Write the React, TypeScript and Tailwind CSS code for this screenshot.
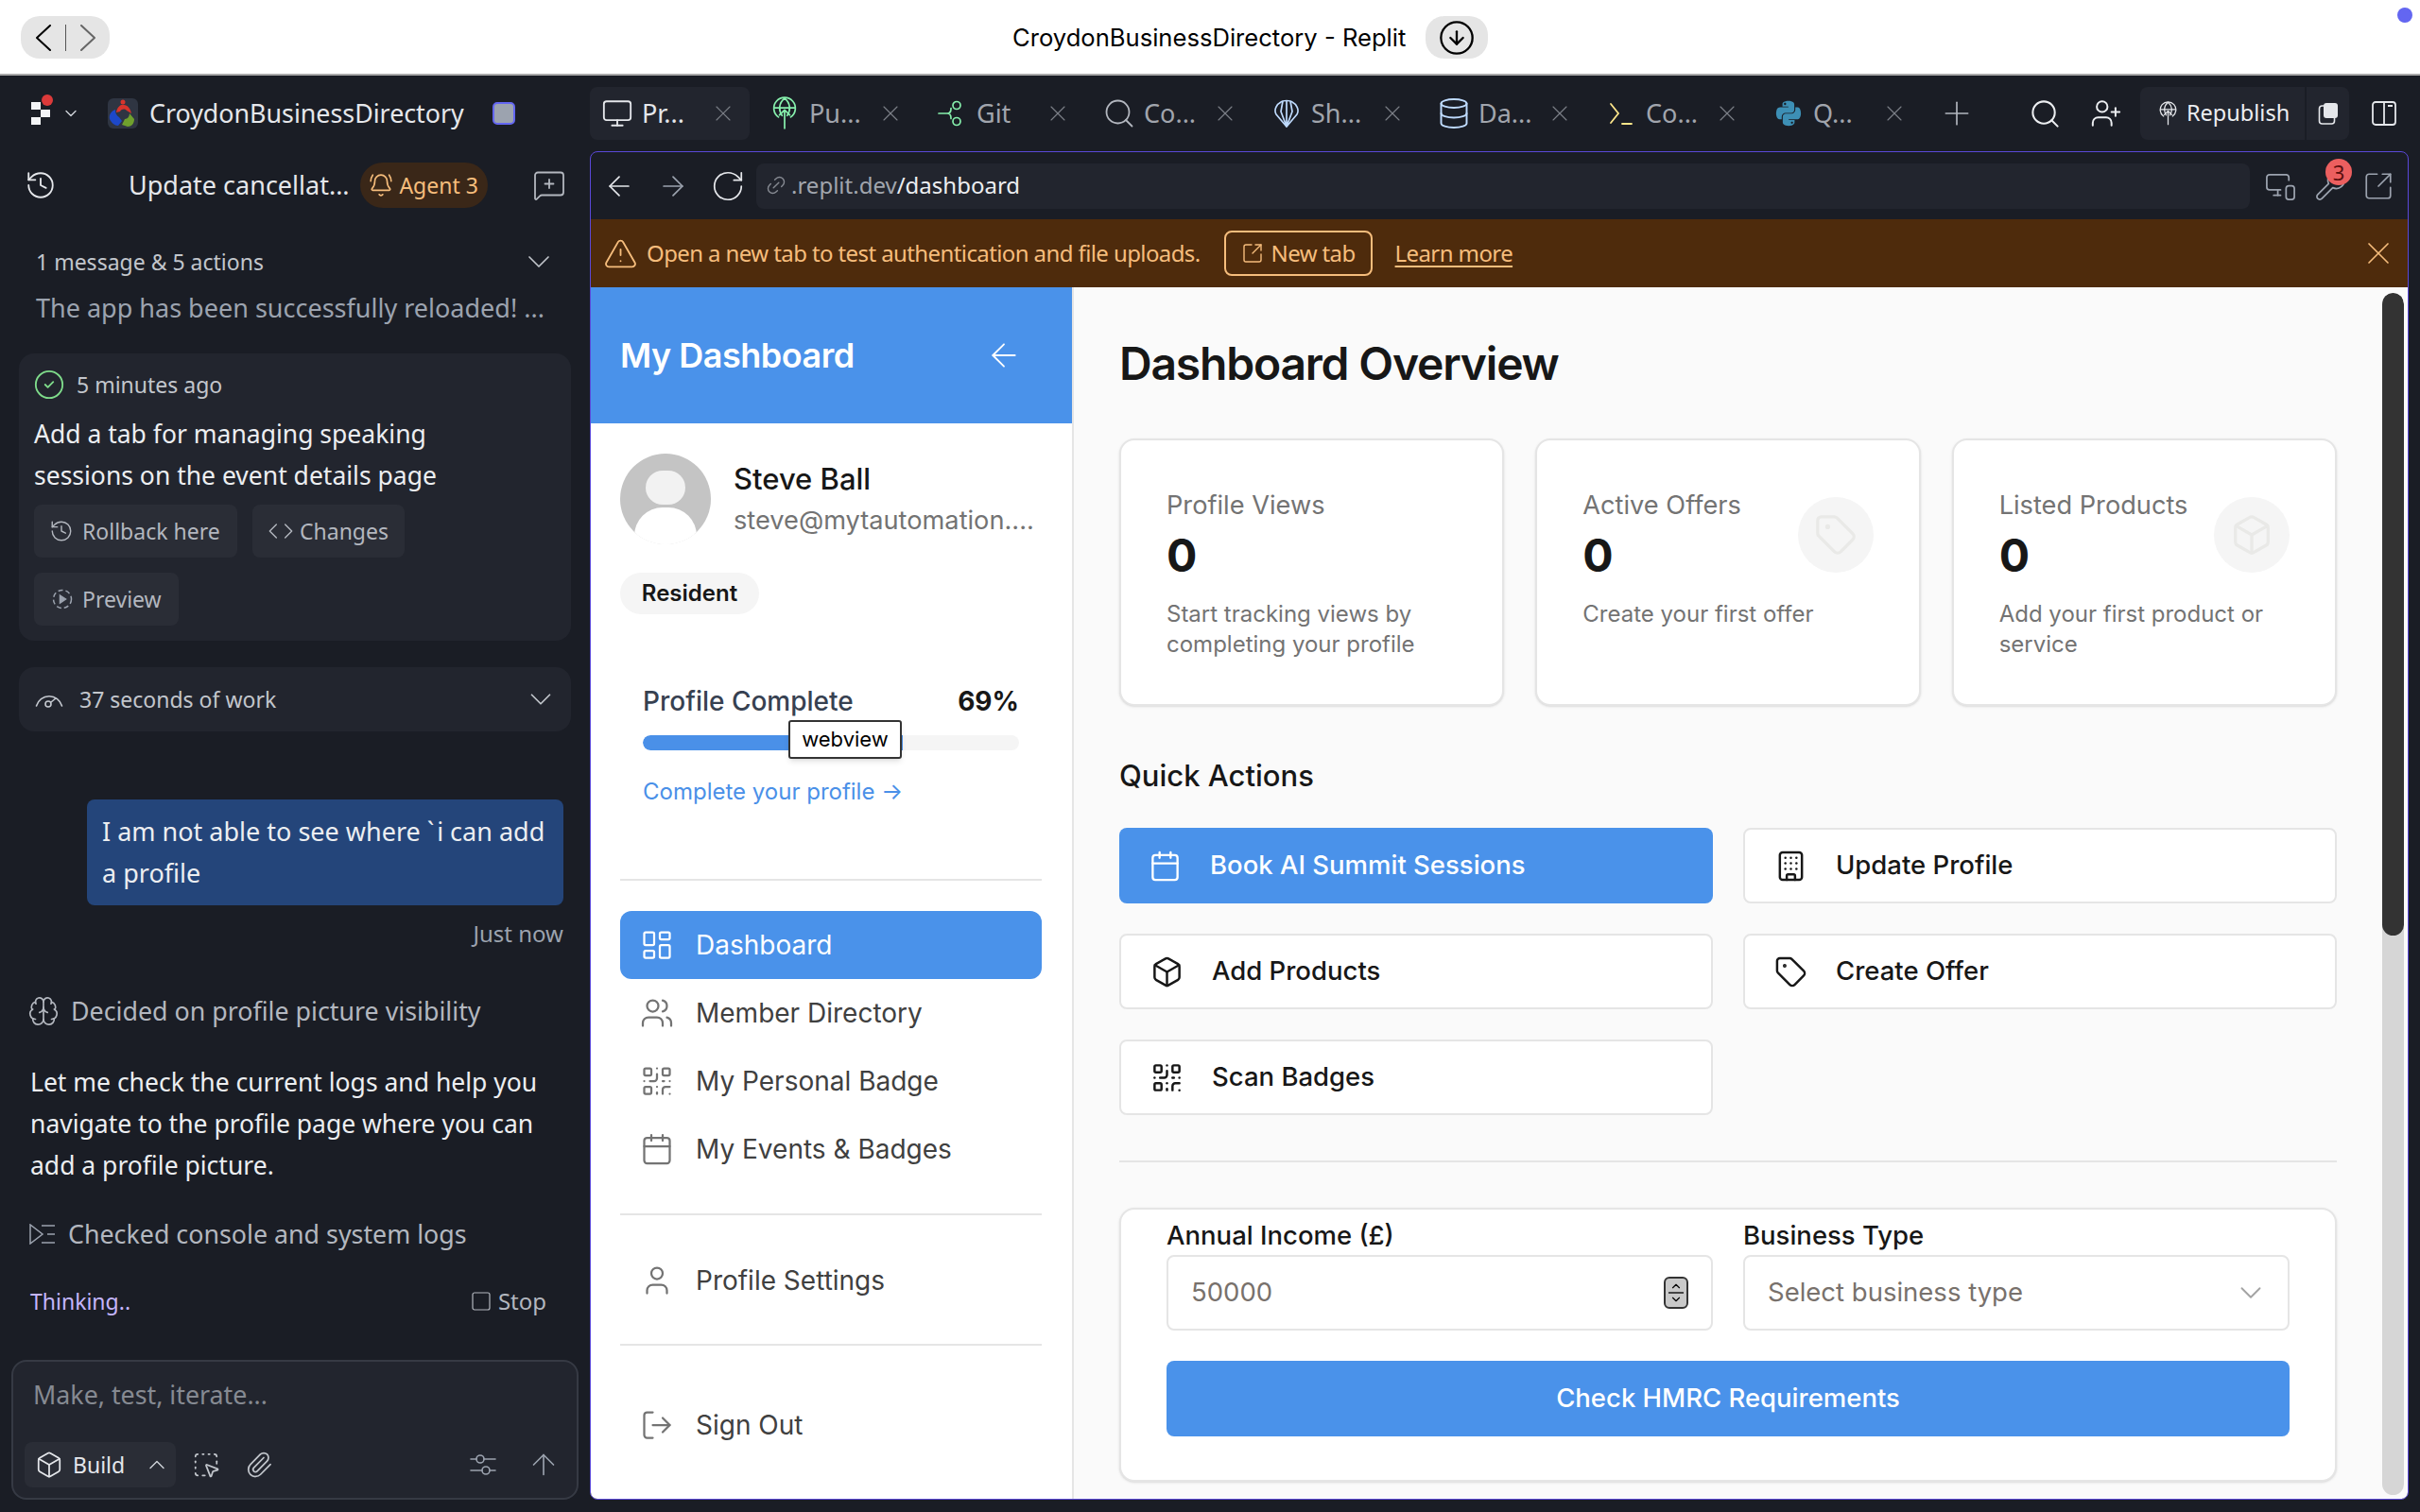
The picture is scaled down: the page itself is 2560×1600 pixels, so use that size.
import React from "react";
import {
  Monitor, Search, Database, Plus, UserPlus, History, BellRing, MessageSquarePlus, ChevronDown, ChevronUp, CircleCheck, Code,
  Brain, Square, Box, SquareDashedMousePointer, Paperclip, ArrowUp, Link2, ArrowLeft, ArrowRight, RotateCw,
  MonitorSmartphone, Wrench, SquareArrowOutUpRight, TriangleAlert, X, LayoutDashboard, Users, QrCode, Calendar, User,
  LogOut, Tag, Building, ArrowDownCircle,
} from "lucide-react";
import { FaPython } from "react-icons/fa";

function PublishIcon({ size = 28, color = "#86efac" }: { size?: number; color?: string }) {
  return (
    <svg width={size} height={size * 1.35} viewBox="0 0 24 32" fill="none" stroke={color} strokeWidth="1.6" strokeLinecap="round" strokeLinejoin="round">
      <path d="M6 20a10.5 10.5 0 1 1 12 0" />
      <path d="M2 11h20M12 1.5c-6 5-6 12-2.5 17M12 1.5c6 5 6 12 2.5 17" />
      <path d="M12 31V13M7 18l5-5 5 5" />
    </svg>
  );
}
function GitIcon() {
  return (
    <svg width="30" height="30" viewBox="0 0 30 30" fill="none" stroke="#86efac" strokeWidth="1.7" strokeLinecap="round">
      <path d="M1 15h9M10 15c3 0 4-2 4-5V9.500M10 15c3 0 4 2 4 5v.5" />
      <circle cx="20" cy="6.500" r="4" />
      <circle cx="20" cy="23.500" r="4" />
    </svg>
  );
}
function ShellIcon() {
  return (
    <svg width="30" height="32" viewBox="0 0 30 32" fill="none" stroke="#bfdbfe" strokeWidth="1.7" strokeLinejoin="round">
      <path d="M15 30 4 17c-3-5 1-11 5-13 2-2 10-2 12 0 4 2 8 8 5 13z" />
      <path d="M15 30 9 14l2-11M15 30V2M15 30l6-16-2-11" />
    </svg>
  );
}
function TerminalIcon() {
  return (
    <svg width="26" height="26" viewBox="0 0 26 26" fill="none" stroke="#fde68a" strokeWidth="1.8" strokeLinecap="round">
      <path d="M2 3l8 10-8 10M14 24h10" />
    </svg>
  );
}
function PanelIcon() {
  return (
    <svg width="28" height="28" viewBox="0 0 28 28" fill="none" stroke="#e5e7eb" strokeWidth="1.8">
      <rect x="2" y="2" width="24" height="24" rx="3" />
      <path d="M14 2v24M18 6h5" />
    </svg>
  );
}
function CopyBlobIcon() {
  return (
    <svg width="22" height="24" viewBox="0 0 22 24" fill="none">
      <rect x="1.500" y="4" width="16" height="19" rx="3" stroke="#e5e7eb" strokeWidth="1.6" />
      <rect x="6" y="1" width="15" height="16" rx="3" fill="#e5e7eb" />
    </svg>
  );
}
function ConsoleListIcon() {
  return (
    <svg width="28" height="22" viewBox="0 0 28 22" fill="none" stroke="#9ca3af" strokeWidth="1.5">
      <path d="M1 1v20l13-10zM13 2h14M19 11h8M13 20h14" />
    </svg>
  );
}
function GaugeIcon() {
  return (
    <svg width="30" height="20" viewBox="0 0 30 20" fill="none" stroke="#c5c9d0" strokeWidth="1.6" strokeLinecap="round">
      <path d="M1.500 17A14 14 0 0 1 28.500 17" />
      <circle cx="14" cy="15" r="3" />
      <path d="M17 13l5-4" />
    </svg>
  );
}
function DashedPlay() {
  return (
    <svg width="22" height="22" viewBox="0 0 22 22" fill="none" stroke="#9ca3af" strokeWidth="1.5">
      <circle cx="11" cy="11" r="9.500" strokeDasharray="5 3" />
      <path d="M8.500 7l6 4-6 4z" fill="#9ca3af" />
    </svg>
  );
}
function SlidersIcon() {
  return (
    <svg width="28" height="24" viewBox="0 0 28 24" fill="none" stroke="#9ca3af" strokeWidth="1.6" strokeLinecap="round">
      <path d="M1 6h6M15 6h12M1 18h12M21 18h6" />
      <circle cx="11" cy="6" r="4" />
      <circle cx="17" cy="18" r="4" />
    </svg>
  );
}
function ReplitLogo() {
  return (
    <svg width="28" height="36" viewBox="0 0 28 36" className="shrink-0 overflow-visible">
      <rect x="0" y="6" width="10" height="8" fill="#f3f4f6" />
      <rect x="10" y="14" width="10" height="8" fill="#f3f4f6" />
      <rect x="0" y="22" width="10" height="8" fill="#f3f4f6" />
      <circle cx="17" cy="4" r="6" fill="#dc3a3a" />
    </svg>
  );
}
function AppLogo() {
  return (
    <svg width="32" height="32" viewBox="0 0 32 32" className="shrink-0">
      <rect width="32" height="32" rx="6" fill="#2f3542" />
      <path d="M9 15c1-6 5-9 8-8 4 0 7 4 8 9l-5-3c-2-2-5-2-7 1z" fill="#d8342c" />
      <circle cx="16" cy="4" r="2.500" fill="#d8342c" />
      <path d="M2 22c-1-4 1-8 6-10 0 4 1 6 4 8l3 4-4 5c-4 0-7-3-9-7z" fill="#1d48c8" />
      <path d="M15 28l3-6c3 0 5-3 5-6l5 6c0 5-3 8-7 8z" fill="#6fa02d" />
    </svg>
  );
}

function Tab({ icon, label, active }: { icon: React.ReactNode; label: string; active?: boolean }) {
  return (
    <div className={`flex h-[56px] w-[169px] shrink-0 items-center rounded-lg pl-[11px] pr-[14px] ${active ? "bg-[#22252e]" : ""}`}>
      <div className="flex w-[36px] shrink-0 justify-center">{icon}</div>
      <span className={`ml-[8px] flex-1 text-[27px] ${active ? "text-[#e5e7eb]" : "text-[#a1a5ad]"}`}>{label}</span>
      <X size={28} strokeWidth={1} className="shrink-0 text-[#7b7f87]" />
    </div>
  );
}

function NavItem({ icon, label, active }: { icon: React.ReactNode; label: string; active?: boolean }) {
  return (
    <div className={`flex h-[72px] items-center rounded-xl pl-[21px] text-[28px] ${active ? "bg-[#4a92ea] text-white" : "text-[#404040]"}`}>
      <div className={`flex w-[36px] shrink-0 justify-center ${active ? "text-white" : "text-[#737373]"}`}>{icon}</div>
      <span className="ml-[23px]">{label}</span>
    </div>
  );
}

function StatCard({ label, desc, icon }: { label: string; desc: string; icon?: React.ReactNode }) {
  return (
    <div className="h-[283px] rounded-2xl border-2 border-[#e5e5e5] bg-white px-[48px] pt-[51px] shadow-sm">
      <div className="flex justify-between">
        <div>
          <div className="h-[36px] text-[27.2px] leading-[36px] text-[#737373]">{label}</div>
          <div className="mt-[11px] h-[48px] text-[48px] font-bold leading-[48px] text-[#171717]">0</div>
        </div>
        {icon && <div className="mt-[9px] flex h-[80px] w-[80px] items-center justify-center rounded-full bg-[#f5f5f5] text-[#e9e9e7]">{icon}</div>}
      </div>
      <div className="mt-[22px] text-[24px] leading-[32px] text-[#737373]">{desc}</div>
    </div>
  );
}

function ActionButton({ icon, label, primary }: { icon: React.ReactNode; label: string; primary?: boolean }) {
  return (
    <div className={`flex h-[80px] items-center rounded-lg pl-[30px] text-[27.5px] font-medium ${primary ? "bg-[#4a92ea] text-white" : "border-2 border-[#e5e5e5] bg-white text-[#171717]"}`}>
      <div className="flex w-[36px] shrink-0 justify-center">{icon}</div>
      <span className="ml-[30px]">{label}</span>
    </div>
  );
}

function GhostBtn({ icon, label, box }: { icon: React.ReactNode; label: string; box: string }) {
  return (
    <div className={`flex h-[56px] items-center rounded-lg bg-[#2a2d36] text-[23px] text-[#b3b7bf] ${box}`}>
      {icon}
      <span>{label}</span>
    </div>
  );
}

export default function App() {
  return (
    <div className="flex h-[1600px] w-[2560px] flex-col overflow-hidden bg-[#1a1d25] [font-family:'Noto_Sans',sans-serif]">
      {/* Window bar */}
      <div className="relative flex h-[80px] shrink-0 items-center border-b-2 border-[#a9a9a9] bg-white pt-[1px] [font-family:Inter,sans-serif]">
        <div className="ml-[22px] flex h-[45px] w-[94px] items-center justify-center gap-[15px] rounded-[20px] bg-[#e5e5e5]">
          <svg width="16" height="28" viewBox="0 0 16 28" fill="none" stroke="#000" strokeWidth="2" strokeLinecap="round" strokeLinejoin="round"><path d="M15 1 1 14l14 13" /></svg>
          <div className="h-[28px] w-[1px] bg-[#555]" />
          <svg width="16" height="28" viewBox="0 0 16 28" fill="none" stroke="#666" strokeWidth="2" strokeLinecap="round" strokeLinejoin="round"><path d="M1 1l14 13L1 27" /></svg>
        </div>
        <span className="ml-[955px] mt-[2px] text-[25.6px] text-black">CroydonBusinessDirectory - Replit</span>
        <div className="ml-[21px] flex h-[45px] w-[66px] items-center justify-center rounded-[20px] bg-[#e5e5e5]">
          <ArrowDownCircle size={40} strokeWidth={1.4} className="text-black" />
        </div>
        <div className="absolute left-[2536px] top-[8px] h-[16px] w-[16px] rounded-full bg-[#6366f1]" />
      </div>

      <div className="flex min-h-0 flex-1">
        {/* Agent column */}
        <div className="flex w-[624px] shrink-0 flex-col">
          <div className="flex h-[80px] shrink-0 items-center pl-[33px]">
            <ReplitLogo />
            <ChevronDown size={20} strokeWidth={1.6} className="ml-[4px] text-[#d1d5db]" />
            <div className="ml-[29px]"><AppLogo /></div>
            <span className="ml-[12px] text-[26.8px] text-[#e5e7eb]">CroydonBusinessDirectory</span>
            <div className="ml-[30px] h-[24px] w-[24px] rounded-[5px] border-2 border-[#6366f1] bg-[#9ca3af]" />
          </div>
          <div className="flex h-[72px] shrink-0 items-center pl-[26px] pr-[25px]">
            <History size={34} strokeWidth={1.3} className="text-[#e5e7eb]" />
            <span className="ml-[76px] text-[27px] text-[#e5e7eb]">Update cancellat...</span>
            <div className="ml-[11px] flex h-[48px] w-[135px] items-center justify-center gap-[6px] rounded-full bg-[#3a2718] text-[23px] text-[#f6bd7c]">
              <BellRing size={26} strokeWidth={1.5} />
              <span>Agent 3</span>
            </div>
            <MessageSquarePlus size={36} strokeWidth={1.2} className="ml-auto text-[#b3b7bf]" />
          </div>
          <div className="mt-[27px] flex h-[36px] shrink-0 items-center justify-between pl-[38px] pr-[34px] text-[23px] text-[#c2c6cc]">
            <span>1 message &amp; 5 actions</span>
            <ChevronDown size={40} strokeWidth={1} />
          </div>
          <div className="mt-[9px] h-[44px] shrink-0 pl-[38px] text-[27px] leading-[44px] text-[#9ca3af]">The app has been successfully reloaded! ...</div>

          <div className="mx-[20px] mt-[26px] h-[304px] shrink-0 rounded-2xl bg-[#22252e] px-[16px] pt-[15px]">
            <div className="flex h-[36px] items-center text-[23px] text-[#c2c6cc]">
              <CircleCheck size={34} strokeWidth={1.3} className="-ml-[1px] text-[#7fdc8b]" />
              <span className="ml-[12px]">5 minutes ago</span>
            </div>
            <div className="mt-[12px] text-[26.5px] leading-[44px] text-[#eceef1]">Add a tab for managing speaking<br />sessions on the event details page</div>
            <div className="mt-[9px] flex gap-[16px]">
              <GhostBtn box="w-[215px] pl-[16px] gap-[9px]" icon={<History size={26} strokeWidth={1.3} />} label="Rollback here" />
              <GhostBtn box="w-[161px] pl-[16px] gap-[6px]" icon={<Code size={28} strokeWidth={1.2} />} label="Changes" />
            </div>
            <div className="mt-[16px]">
              <GhostBtn box="w-[153px] pl-[19px] gap-[10px]" icon={<DashedPlay />} label="Preview" />
            </div>
          </div>

          <div className="mx-[20px] mt-[28px] flex h-[68px] shrink-0 items-center rounded-2xl bg-[#22252e] pl-[17px] pr-[13px] text-[23px] text-[#c2c6cc]">
            <GaugeIcon />
            <span className="ml-[17px]">37 seconds of work</span>
            <ChevronDown size={38} strokeWidth={1.1} className="ml-auto" />
          </div>

          <div className="ml-[92px] mt-[72px] h-[112px] w-[504px] shrink-0 rounded-lg bg-[#24457a] px-[16px] py-[12px] text-[27px] leading-[44px] text-[#eceef1]">
            {"I am not able to see where `\u200Ai can add a profile"}
          </div>
          <div className="mr-[28px] mt-[14px] h-[32px] shrink-0 text-right text-[24px] leading-[32px] text-[#9ca3af]">Just now</div>

          <div className="mt-[48px] flex h-[36px] shrink-0 items-center pl-[29px] text-[26.8px] text-[#b3b7bf]">
            <Brain size={34} strokeWidth={1.2} />
            <span className="ml-[12px]">Decided on profile picture visibility</span>
          </div>
          <div className="ml-[32px] mt-[35px] w-[570px] shrink-0 text-[26.5px] leading-[44px] text-[#eceef1]">
            Let me check the current logs and help you navigate to the profile page where you can add a profile picture.
          </div>
          <div className="mt-[33px] flex h-[36px] shrink-0 items-center pl-[31px] text-[26.8px] text-[#b3b7bf]">
            <ConsoleListIcon />
            <span className="ml-[13px]">Checked console and system logs</span>
          </div>
          <div className="mt-[35px] flex h-[36px] shrink-0 items-center justify-between pl-[32px] pr-[46px] text-[23px]">
            <span className="text-[#c4b5fd]">Thinking..</span>
            <div className="flex items-center gap-[6px] text-[24px] text-[#b3b7bf]">
              <Square size={24} strokeWidth={1.2} />
              <span>Stop</span>
            </div>
          </div>

          <div className="mx-[12px] mt-[44px] h-[148px] shrink-0 rounded-2xl border-2 border-[#363a44] bg-[#22252e] pl-[12px] pr-[17px]">
            <div className="mt-[17px] h-[36px] pl-[9px] text-[26.8px] leading-[36px] text-[#868a92]">Make, test, iterate...</div>
            <div className="mt-[32px] flex h-[48px] items-center">
              <div className="flex h-[48px] w-[160px] items-center rounded-lg bg-[#2a2d36] pl-[11px] text-[#e5e7eb]">
                <Box size={30} strokeWidth={1.4} />
                <span className="ml-[10px] text-[23px]">Build</span>
                <ChevronUp size={28} strokeWidth={1.2} className="ml-[20px] text-[#d1d5db]" />
              </div>
              <SquareDashedMousePointer size={30} strokeWidth={1.4} className="ml-[17px] text-[#c2c6cc]" />
              <Paperclip size={30} strokeWidth={1.4} className="ml-[26px] text-[#c2c6cc]" />
              <div className="ml-auto flex items-center gap-[32px] text-[#9ca3af]">
                <SlidersIcon />
                <ArrowUp size={36} strokeWidth={1.1} />
              </div>
            </div>
          </div>
        </div>

        {/* Workspace */}
        <div className="flex min-w-0 flex-1 flex-col">
          <div className="flex h-[80px] shrink-0 items-center">
            <div className="flex gap-[8px]">
              <Tab active icon={<Monitor size={34} strokeWidth={1.3} className="text-[#e5e7eb]" />} label="Pr..." />
              <Tab icon={<PublishIcon size={26} />} label="Pu..." />
              <Tab icon={<GitIcon />} label="Git" />
              <Tab icon={<Search size={36} strokeWidth={1.2} className="text-[#b3b7bf]" />} label="Co..." />
              <Tab icon={<ShellIcon />} label="Sh..." />
              <Tab icon={<Database size={36} strokeWidth={1.3} className="text-[#bfdbfe]" />} label="Da..." />
              <Tab icon={<TerminalIcon />} label="Co..." />
              <Tab icon={<FaPython size={30} color="#3d8fb5" />} label="Q..." />
            </div>
            <Plus size={40} strokeWidth={1} className="ml-[18px] shrink-0 text-[#b3b7bf]" />
            <Search size={35} strokeWidth={1.4} className="ml-[56px] shrink-0 text-[#eceef1]" />
            <UserPlus size={34} strokeWidth={1.4} className="ml-[30px] shrink-0 text-[#eceef1]" />
            <div className="ml-[19px] flex h-[56px] w-[221px] shrink-0 items-center rounded-lg bg-[#22252e]">
              <div className="flex h-full w-[176px] items-center border-r-2 border-[#1a1d25] pl-[20px]">
                <PublishIcon size={19} color="#e5e7eb" />
                <span className="ml-[10px] text-[23.5px] text-[#eceef1]">Republish</span>
              </div>
              <div className="flex flex-1 justify-center"><CopyBlobIcon /></div>
            </div>
            <div className="ml-[23px]"><PanelIcon /></div>
          </div>

          <div className="flex h-[1427px] w-[1924px] shrink-0 flex-col overflow-hidden rounded-lg border border-[#5a48d8]">
            <div className="flex h-[71px] shrink-0 items-center pl-[13px] text-[#e5e7eb]">
              <ArrowLeft size={34} strokeWidth={1.2} />
              <ArrowRight size={34} strokeWidth={1.2} className="ml-[23px] text-[#9ca3af]" />
              <RotateCw size={38} strokeWidth={1.1} className="ml-[22px]" />
              <div className="ml-[11px] flex h-[48px] w-[1580px] shrink-0 items-center rounded-lg bg-[#22252e] pb-[2px] pl-[9px] text-[24px]">
                <Link2 size={24} strokeWidth={1.4} className="-rotate-45 text-[#868a92]" />
                <span className="ml-[4px] text-[#a1a5ad]">.replit.dev</span>
                <span className="text-[#eceef1]">/dashboard</span>
              </div>
              <div className="relative ml-[15px] flex items-center text-[#9ca3af]">
                <MonitorSmartphone size={35} strokeWidth={1.2} />
                <Wrench size={35} strokeWidth={1.2} className="ml-[18px]" />
                <SquareArrowOutUpRight size={34} strokeWidth={1.2} className="ml-[16px]" />
                <div className="absolute -top-[11px] left-[65px] flex h-[28px] w-[28px] items-center justify-center rounded-full bg-[#ec5f5f] text-[22px] text-[#5c0f0f]">3</div>
              </div>
            </div>
            <div className="flex h-[72px] shrink-0 items-center bg-[#4e2b0c] pl-[13px] pr-[11px] text-[24px] tracking-[-0.6px] text-[#f6bd7c]">
              <TriangleAlert size={37} strokeWidth={1.2} />
              <span className="ml-[9px]">Open a new tab to test authentication and file uploads.</span>
              <div className="ml-[25px] flex h-[48px] w-[157px] items-center justify-center gap-[8px] rounded-lg border-2 border-[#f6bd7c]">
                <SquareArrowOutUpRight size={24} strokeWidth={1.4} />
                <span>New tab</span>
              </div>
              <span className="ml-[24px] underline underline-offset-4">Learn more</span>
              <X size={40} strokeWidth={1} className="ml-auto" />
            </div>

            {/* Web app */}
            <div className="flex min-h-0 flex-1 [font-family:Inter,sans-serif]">
              <div className="w-[511px] shrink-0 border-r-2 border-[#e5e5e5] bg-white">
                <div className="flex h-[144px] items-center justify-between bg-[#4a92ea] pl-[31px] pr-[52px] text-white">
                  <span className="text-[36px] font-semibold tracking-[-0.5px]">My Dashboard</span>
                  <ArrowLeft size={40} strokeWidth={1.1} />
                </div>
                <div className="pl-[31px] pr-[32px]">
                  <div className="mt-[32px] flex h-[96px] items-center">
                    <div className="relative h-[96px] w-[96px] shrink-0 overflow-hidden rounded-full bg-[#c4c4c4]">
                      <div className="absolute left-[27px] top-[18px] h-[36px] w-[42px] rounded-full bg-[#f2f2f2]" />
                      <div className="absolute left-[15px] top-[57px] h-[60px] w-[66px] rounded-full bg-white" />
                      <div className="absolute bottom-0 left-0 h-[11px] w-full bg-white" />
                    </div>
                    <div className="ml-[24px] min-w-0">
                      <div className="text-[31px] font-medium leading-[40px] text-[#171717]">Steve Ball</div>
                      <div className="mt-[6px] text-[27.2px] leading-[36px] text-[#737373]">steve@mytautomation....</div>
                    </div>
                  </div>
                  <div className="mt-[30px] flex h-[44px] w-[147px] items-center justify-center rounded-full bg-[#f5f5f5] text-[24px] font-semibold text-[#171717]">Resident</div>

                  <div className="relative mt-[74px] px-[24px]">
                    <div className="flex h-[36px] items-center justify-between text-[28px]">
                      <span className="font-medium text-[#374151]">Profile Complete</span>
                      <span className="font-bold text-[#171717]">69%</span>
                    </div>
                    <div className="mt-[18px] h-[16px] overflow-hidden rounded-full bg-[#f5f5f5]">
                      <div className="h-full w-[69%] rounded-l-full bg-[#4a90e8]" />
                    </div>
                    <div className="mt-[28px] h-[32px] text-[24px] leading-[32px] text-[#4a90e8]">Complete your profile →</div>
                    <div className="absolute left-[178px] top-[38px] flex h-[41px] w-[120px] items-center justify-center rounded-[3px] border-2 border-[#333] bg-white text-[22px] text-black shadow-md">webview</div>
                  </div>

                  <div className="mt-[76px] h-[2px] bg-[#e5e5e5]" />
                  <div className="mt-[32px]">
                    <NavItem active icon={<LayoutDashboard size={36} strokeWidth={1.5} />} label="Dashboard" />
                    <NavItem icon={<Users size={36} strokeWidth={1.5} />} label="Member Directory" />
                    <NavItem icon={<QrCode size={36} strokeWidth={1.5} />} label="My Personal Badge" />
                    <NavItem icon={<Calendar size={36} strokeWidth={1.5} />} label="My Events & Badges" />
                  </div>
                  <div className="mt-[32px] h-[2px] bg-[#e5e5e5]" />
                  <div className="mt-[33px]"><NavItem icon={<User size={36} strokeWidth={1.5} />} label="Profile Settings" /></div>
                  <div className="mt-[31px] h-[2px] bg-[#e5e5e5]" />
                  <div className="mt-[48px]"><NavItem icon={<LogOut size={36} strokeWidth={1.5} />} label="Sign Out" /></div>
                </div>
              </div>

              <div className="flex min-w-0 flex-1 bg-[#fafafa]">
                <div className="min-w-0 flex-1 overflow-hidden px-[48px]">
                  <div className="mt-[49px] h-[64px] text-[48px] font-semibold leading-[64px] tracking-tight text-[#171717]">Dashboard Overview</div>
                  <div className="mt-[47px] grid grid-cols-3 gap-[33px]">
                    <StatCard label="Profile Views" desc="Start tracking views by completing your profile" />
                    <StatCard label="Active Offers" desc="Create your first offer" icon={<Tag size={46} strokeWidth={1.7} />} />
                    <StatCard label="Listed Products" desc="Add your first product or service" icon={<Box size={46} strokeWidth={1.7} />} />
                  </div>
                  <div className="mt-[50px] h-[48px] text-[31px] font-medium leading-[48px] text-[#171717]">Quick Actions</div>
                  <div className="mt-[31px] grid grid-cols-2 gap-[32px]">
                    <ActionButton primary icon={<Calendar size={35} strokeWidth={1.6} />} label="Book AI Summit Sessions" />
                    <ActionButton icon={<Building size={35} strokeWidth={1.7} />} label="Update Profile" />
                    <ActionButton icon={<Box size={35} strokeWidth={1.7} />} label="Add Products" />
                    <ActionButton icon={<Tag size={35} strokeWidth={1.7} />} label="Create Offer" />
                    <ActionButton icon={<QrCode size={35} strokeWidth={1.7} />} label="Scan Badges" />
                  </div>
                  <div className="mt-[48px] h-[2px] bg-[#e5e5e5]" />
                  <div className="mt-[48px] h-[290px] rounded-2xl border-2 border-[#e5e5e5] bg-white px-[48px] pt-[9px] shadow-sm">
                    <div className="grid grid-cols-2 gap-x-[32px]">
                      <div>
                        <div className="h-[36px] text-[27.5px] font-medium leading-[36px] text-[#171717]">Annual Income (£)</div>
                        <div className="mt-[3px] flex h-[80px] items-center justify-between rounded-lg border-2 border-[#e5e5e5] bg-white pl-[24px] pr-[24px] text-[27.5px] text-[#78716c]">
                          <span>50000</span>
                          <div className="flex h-[34px] w-[26px] flex-col items-center justify-center rounded-md border-2 border-[#333] bg-[#c9c9c9] text-black">
                            <ChevronUp size={14} strokeWidth={2} className="-mb-[1px]" />
                            <div className="h-[2px] w-[16px] bg-[#444]" />
                            <ChevronDown size={14} strokeWidth={2} className="-mt-[1px]" />
                          </div>
                        </div>
                      </div>
                      <div>
                        <div className="h-[36px] text-[27.5px] font-medium leading-[36px] text-[#171717]">Business Type</div>
                        <div className="mt-[3px] flex h-[80px] items-center justify-between rounded-lg border-2 border-[#e5e5e5] bg-white pl-[24px] pr-[20px] text-[27.5px] text-[#78716c]">
                          <span>Select business type</span>
                          <ChevronDown size={38} strokeWidth={1.2} className="text-[#a3a3a3]" />
                        </div>
                      </div>
                    </div>
                    <div className="mt-[32px] flex h-[80px] items-center justify-center rounded-lg bg-[#4a92ea] text-[27.5px] font-medium text-white">Check HMRC Requirements</div>
                  </div>
                </div>
                <div className="w-[27px] shrink-0 pr-[4px] pt-[6px]">
                  <div className="h-[1272px] w-[23px] overflow-hidden rounded-full bg-[#d6d6d6]">
                    <div className="h-[680px] rounded-full bg-[#333]" />
                  </div>
                </div>
              </div>
            </div>
          </div>
        </div>
      </div>
    </div>
  );
}
